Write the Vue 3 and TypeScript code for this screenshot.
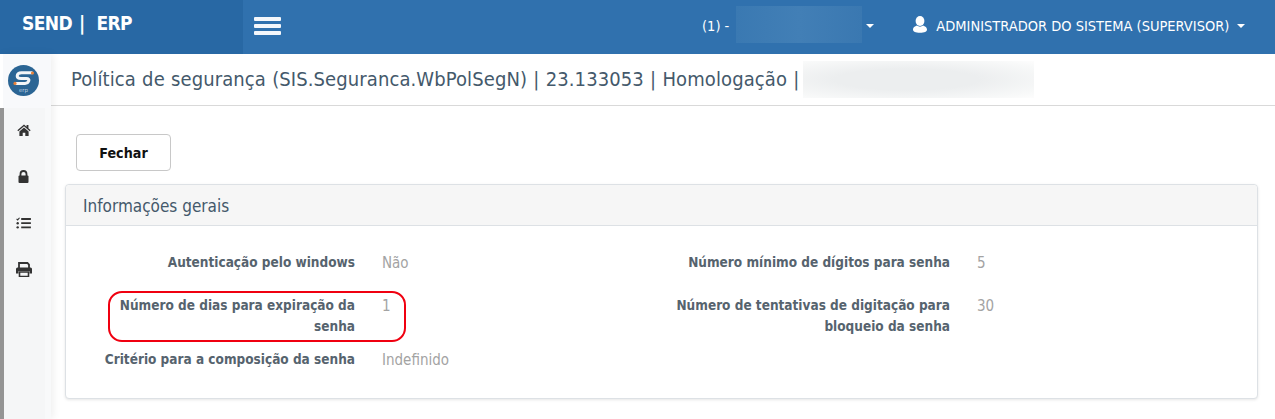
<script setup lang="ts">
interface Field { label: string; value: string }
const leftFields: Field[] = [
  { label: 'Autenticação pelo windows', value: 'Não' },
  { label: 'Número de dias para expiração da senha', value: '1' },
  { label: 'Critério para a composição da senha', value: 'Indefinido' },
]
const rightFields: Field[] = [
  { label: 'Número mínimo de dígitos para senha', value: '5' },
  { label: 'Número de tentativas de digitação para bloqueio da senha', value: '30' },
]
</script>

<template>
  <div class="app">
    <header class="topbar">
      <div class="brand">SEND <span class="sep">|</span> ERP</div>
      <div class="burger"><span></span><span></span><span></span></div>
      <div class="top-right">
        <div class="company">
          <span>(1) -</span>
          <div class="blur-top"></div>
          <i class="caret"></i>
        </div>
        <div class="user">
          <svg width="16" height="17" viewBox="0 0 15 17"><ellipse cx="7.5" cy="5" rx="4.4" ry="5" fill="#fff"/><path d="M0.5 13.5C0.5 11 3 10.2 4.5 9.5 6 11 9 11 10.5 9.5 12 10.2 14.5 11 14.5 13.5 14.5 15.8 12 16.8 7.5 16.8 3 16.8 0.5 15.8 0.5 13.5Z" fill="#fff"/></svg>
          <span>ADMINISTRADOR DO SISTEMA (SUPERVISOR)</span>
          <i class="caret"></i>
        </div>
      </div>
    </header>
    <div class="main">
      <aside class="sidebar">
        <div class="logo-cell">
          <svg width="31" height="31" viewBox="0 0 31 31">
            <circle cx="15.5" cy="15.5" r="15.5" fill="#2b6594"/>
            <path d="M24.5 7.8H13.5C10.5 7.8 9.2 9.3 9.2 11 9.2 13 10.8 13.6 13 13.6H18.5C20.6 13.6 21.3 14.6 20.8 15.8 20.3 17.2 19 18.4 17 18.4H7" fill="none" stroke="#f4f6f8" stroke-width="3"/>
            <circle cx="24.5" cy="8" r="1.6" fill="#e8823a"/>
            <circle cx="7" cy="18.4" r="1.6" fill="#e8823a"/>
            <text x="15.5" y="26.5" text-anchor="middle" class="logo-text">erp</text>
          </svg>
        </div>
        <nav class="menu">
          <div class="menu-item">
            <svg width="14" height="12" viewBox="0 0 15 13"><path d="M7.5 0.5 0.3 6.8l1 1L7.5 2.5l6.2 5.3 1-1-2.4-2.1V1h-2v1.9ZM2.5 8.2V13h3.6V9.4h2.8V13h3.6V8.2L7.5 3.9Z" fill="#333"/></svg>
          </div>
          <div class="menu-item">
            <svg width="11" height="13" viewBox="0 0 11 13"><path d="M2.5 6V4a3 3 0 0 1 6 0v2" fill="none" stroke="#333" stroke-width="1.8"/><rect x="0.5" y="5.5" width="10" height="7.5" rx="1" fill="#333"/></svg>
          </div>
          <div class="menu-item">
            <svg width="15" height="12" viewBox="0 0 16 13"><path d="M0.5 2 1.7 3.2 3.7 0.8" fill="none" stroke="#333" stroke-width="1.2"/><circle cx="1.7" cy="6.7" r="1.3" fill="#333"/><circle cx="1.7" cy="11.2" r="1.3" fill="#333"/><path d="M5.5 1.2h10.5v2H5.5ZM5.5 5.7h10.5v2H5.5ZM5.5 10.2h10.5v2H5.5Z" fill="#333"/></svg>
          </div>
          <div class="menu-item">
            <svg width="16" height="15" viewBox="0 0 16 15"><path d="M3 6V1h8.5L13 2.5V6" fill="none" stroke="#333" stroke-width="1.8"/><path d="M1.5 5.5h13A1.5 1.5 0 0 1 16 7v4.5h-2.5V9h-11v2.5H0V7a1.5 1.5 0 0 1 1.5-1.5Z" fill="#333"/><path d="M3.5 10h9v4.5h-9Z" fill="none" stroke="#333" stroke-width="1.6"/></svg>
          </div>
        </nav>
      </aside>
      <main class="content">
        <div class="page-title">
          <span>Política de segurança (SIS.Seguranca.WbPolSegN) | 23.133053 | Homologação |</span>
          <div class="blur-title"></div>
        </div>
        <div class="page-body">
          <button class="close-btn" type="button">Fechar</button>
          <section class="panel">
            <div class="panel-head">Informações gerais</div>
            <div class="panel-body">
              <div class="column">
                <div v-for="f in leftFields" :key="f.label" class="field">
                  <div class="label">{{ f.label }}</div>
                  <div class="value">{{ f.value }}</div>
                </div>
              </div>
              <div class="column">
                <div v-for="f in rightFields" :key="f.label" class="field">
                  <div class="label">{{ f.label }}</div>
                  <div class="value">{{ f.value }}</div>
                </div>
              </div>
              <div class="highlight"></div>
            </div>
          </section>
        </div>
      </main>
    </div>
  </div>
</template>

<style scoped>
.app {
  width: 1275px;
  height: 419px;
  overflow: hidden;
  background: #fff;
  font-family: "DejaVu Sans Condensed", "DejaVu Sans", sans-serif;
  display: flex;
  flex-direction: column;
}
.topbar {
  height: 54px;
  flex: none;
  display: flex;
  background: #3071ae;
  color: #fff;
}
.brand {
  width: 243px;
  box-sizing: border-box;
  padding: 12px 0 0 22px;
  background: #2868a4;
  font-size: 19px;
  line-height: 22px;
  font-weight: 700;
  letter-spacing: -0.6px;
  word-spacing: 4px;
  white-space: pre;
}
.sep {
  margin-left: -2.5px;
  margin-right: 2.5px;
}
.burger {
  margin: 17px 0 0 11px;
  width: 27px;
  display: flex;
  flex-direction: column;
  gap: 3px;
}
.burger span {
  height: 4px;
  border-radius: 1px;
  background: #f4f7fb;
}
.top-right {
  flex: 1;
  display: flex;
  align-items: flex-start;
  font-size: 14.5px;
}
.company {
  margin-left: 421px;
  padding-top: 6px;
  height: 37px;
  display: flex;
  align-items: center;
}
.company span { padding-top: 2px; }
.blur-top {
  width: 126px;
  height: 37px;
  margin-left: 7px;
  background: linear-gradient(90deg, #3a79b2, #427fb6 50%, #3a78b1);
}
.caret {
  width: 0;
  height: 0;
  margin-left: 4px;
  margin-top: 2px;
  border-left: 4px solid transparent;
  border-right: 4px solid transparent;
  border-top: 4px solid #fff;
}
.user {
  margin-left: 38px;
  padding-top: 6px;
  height: 37px;
  display: flex;
  align-items: center;
  white-space: nowrap;
}
.user span { margin-left: 8px; margin-right: 4px; padding-top: 2px; }
.user .caret { margin-left: 4px; }
.main {
  flex: 1;
  display: flex;
  min-height: 0;
}
.sidebar {
  width: 51px;
  flex: none;
  background: #f8f9fa;
  box-shadow: 2px 0 8px rgba(0, 0, 0, 0.07);
  position: relative;
  z-index: 1;
  box-sizing: border-box;
  display: flex;
  flex-direction: column;
}
.logo-cell {
  height: 54px;
  padding: 11px 0 0 8px;
  box-sizing: border-box;
  flex: none;
  background: linear-gradient(90deg, #fff 3px, #f8f9fb 3px);
}
.logo-text {
  font-size: 5.5px;
  fill: #b9cde0;
  font-family: "DejaVu Sans", sans-serif;
}
.menu {
  flex: 1;
  width: 45px;
  box-sizing: border-box;
  border-left: 4px solid #949494;
  background: #f5f6f7;
}
.menu-item {
  height: 46.4px;
  width: 39px;
  display: flex;
  align-items: center;
  justify-content: center;
  position: relative;
  top: -1px;
}
.content {
  flex: 1;
  min-width: 0;
}
.page-title {
  height: 51px;
  border-bottom: 1px solid #d9d9d9;
  display: flex;
  align-items: flex-start;
  padding-left: 20px;
  color: #44596b;
  font-size: 20px;
  line-height: 50px;
  white-space: nowrap;
  letter-spacing: 0.1px;
  word-spacing: 0.4px;
}
.blur-title {
  width: 231px;
  height: 37px;
  margin: 7px 0 0 4px;
  background: radial-gradient(ellipse at 45% 50%, #eceeef 40%, #f8f9f9 85%, #fdfdfd 100%);
}
.page-body {
  padding: 28px 17px 0 14px;
}
.close-btn {
  display: block;
  margin-left: 11px;
  width: 95px;
  height: 37px;
  background: #fff;
  border: 1px solid #c8c8c8;
  border-radius: 4px;
  color: #111;
  font: 700 14.2px "DejaVu Sans Condensed", "DejaVu Sans", sans-serif;
}
.panel {
  margin-top: 13px;
  height: 215px;
  box-sizing: border-box;
  border: 1px solid #dde1e5;
  border-radius: 4px;
  box-shadow: 0 1px 3px rgba(0, 0, 0, 0.1);
  background: #fff;
}
.panel-head {
  height: 41px;
  box-sizing: border-box;
  padding: 0 17px;
  background: #f6f6f6;
  border-bottom: 1px solid #dde1e5;
  border-radius: 4px 4px 0 0;
  color: #44596b;
  font-size: 17px;
  line-height: 42px;
}
.panel-body {
  position: relative;
  display: grid;
  grid-template-columns: 595px 1fr;
  padding: 26px 0 0 14px;
}
.column {
  display: flex;
  flex-direction: column;
  gap: 12px;
}
.field {
  display: grid;
  grid-template-columns: 275px 1fr;
  column-gap: 27px;
  line-height: 21px;
}
.field:first-child {
  margin-bottom: 10px;
}
.label {
  text-align: right;
  font-weight: 700;
  color: #56636e;
  font-size: 13.5px;
}
.value {
  color: #a3a3a3;
  font-size: 15px;
  height: 21px;
  line-height: 22px;
}
.highlight {
  position: absolute;
  left: 42px;
  top: 65px;
  width: 298px;
  height: 51px;
  box-sizing: border-box;
  border: 2px solid #f00010;
  border-radius: 14px;
  pointer-events: none;
}
</style>
